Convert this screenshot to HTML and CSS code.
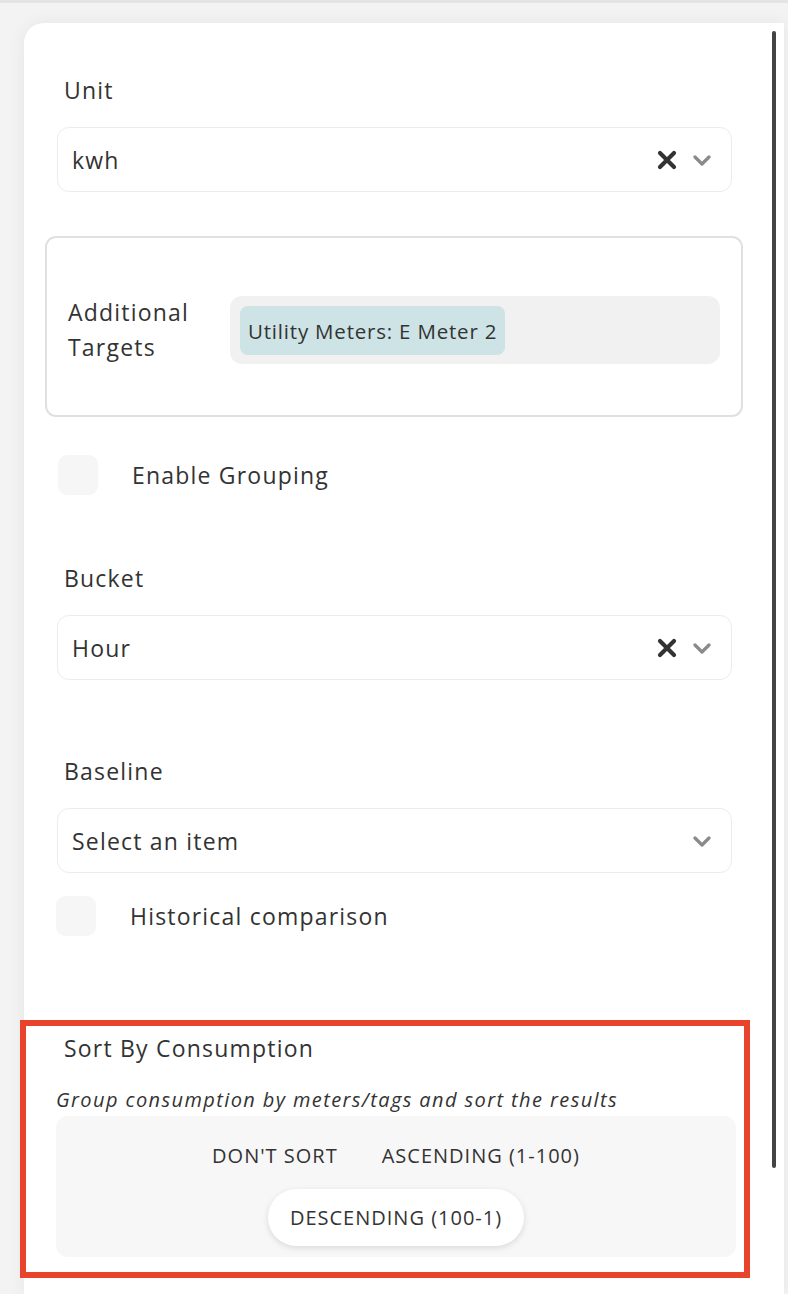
FILE: index.html
```html
<!DOCTYPE html>
<html>
<head>
<meta charset="utf-8">
<link rel="stylesheet" href="styles.css">
</head>
<body>
<div class="page">
  <div class="card">
    <div class="scrollbar"></div>

    <div class="label label-unit">Unit</div>
    <div class="select">
      <span class="select-value">kwh</span>
      <span class="select-icons">
        <svg class="ico-x" width="20" height="20" viewBox="0 0 20 20"><path d="M3 3 L17 17 M17 3 L3 17" stroke="#333" stroke-width="4.2" stroke-linecap="round" fill="none"/></svg>
        <svg class="ico-chev" width="18" height="12" viewBox="0 0 18 12"><path d="M2 2 L9 9 L16 2" stroke="#8a8a8a" stroke-width="3.2" stroke-linecap="round" stroke-linejoin="round" fill="none"/></svg>
      </span>
    </div>

    <div class="targets">
      <div class="targets-label">Additional<br>Targets</div>
      <div class="chips">
        <span class="chip">Utility Meters: E Meter 2</span>
      </div>
    </div>

    <div class="check-row check-grouping">
      <span class="checkbox"></span>
      <span class="check-text">Enable Grouping</span>
    </div>

    <div class="label label-bucket">Bucket</div>
    <div class="select">
      <span class="select-value">Hour</span>
      <span class="select-icons">
        <svg class="ico-x" width="20" height="20" viewBox="0 0 20 20"><path d="M3 3 L17 17 M17 3 L3 17" stroke="#333" stroke-width="4.2" stroke-linecap="round" fill="none"/></svg>
        <svg class="ico-chev" width="18" height="12" viewBox="0 0 18 12"><path d="M2 2 L9 9 L16 2" stroke="#8a8a8a" stroke-width="3.2" stroke-linecap="round" stroke-linejoin="round" fill="none"/></svg>
      </span>
    </div>

    <div class="label label-baseline">Baseline</div>
    <div class="select">
      <span class="select-value">Select an item</span>
      <span class="select-icons">
        <svg class="ico-chev" width="18" height="12" viewBox="0 0 18 12"><path d="M2 2 L9 9 L16 2" stroke="#8a8a8a" stroke-width="3.2" stroke-linecap="round" stroke-linejoin="round" fill="none"/></svg>
      </span>
    </div>

    <div class="check-row check-history">
      <span class="checkbox"></span>
      <span class="check-text">Historical comparison</span>
    </div>

    <div class="sort-box">
      <div class="sort-title">Sort By Consumption</div>
      <div class="sort-desc">Group consumption by meters/tags and sort the results</div>
      <div class="segment">
        <button class="seg-btn">DON'T SORT</button>
        <button class="seg-btn">ASCENDING (1-100)</button>
        <button class="seg-btn active">DESCENDING (100-1)</button>
      </div>
    </div>
  </div>
</div>
</body>
</html>
```

FILE: styles.css
```css
* { box-sizing: border-box; }

html, body {
  margin: 0;
  padding: 0;
  height: 100%;
}

body {
  background: #f3f3f3;
  border-top: 3px solid #e4e4e4;
  font-family: "Open Sans", "Liberation Sans", sans-serif;
  color: #333;
  overflow: hidden;
}

.page {
  padding: 20px 4px 0 24px;
  height: 100%;
}

.card {
  position: relative;
  background: #fff;
  border-radius: 20px 0 0 0;
  box-shadow: 0 0 18px rgba(0, 0, 0, 0.06);
  height: 100%;
  padding-top: 52px;
}

.scrollbar {
  position: absolute;
  top: 8px;
  right: 8px;
  width: 4px;
  height: 1137px;
  background: #444;
  border-radius: 2px;
}

.label {
  font-size: 23px;
  line-height: 30px;
  letter-spacing: 1.2px;
  margin-left: 40px;
}

.select {
  display: flex;
  align-items: center;
  justify-content: space-between;
  height: 65px;
  margin: 22px 52px 0 33px;
  padding: 0 20px 0 14px;
  border: 1.5px solid #ececec;
  border-radius: 12px;
  font-size: 23px;
  letter-spacing: 1.2px;
}

.select-icons {
  display: flex;
  align-items: center;
  gap: 16px;
}

.ico-x { display: block; }
.ico-chev { display: block; margin-top: 2px; }

.targets {
  display: flex;
  align-items: center;
  margin: 44px 0 0 21px;
  width: 698px;
  height: 181px;
  border: 2px solid #e0e0e0;
  border-radius: 11px;
  padding: 7px 21px 0 21px;
}

.targets-label {
  flex: 0 0 162px;
  font-size: 23px;
  line-height: 35px;
  letter-spacing: 1.2px;
}

.chips {
  flex: 1;
  background: #f1f1f1;
  border-radius: 12px;
  padding: 10px 10px 9px 10px;
  height: 68px;
}

.chip {
  display: inline-flex;
  align-items: center;
  height: 49px;
  padding: 0 8px;
  background: #cde3e5;
  border-radius: 8px;
  font-size: 20.5px;
  letter-spacing: 0.8px;
}

.check-row {
  display: flex;
  align-items: center;
  gap: 34px;
  font-size: 23px;
  letter-spacing: 1.2px;
}

.check-grouping { margin: 38px 0 0 34px; }
.check-history { margin: 23px 0 0 32px; }

.checkbox {
  width: 40px;
  height: 40px;
  background: #f6f6f6;
  border-radius: 9px;
  flex: 0 0 40px;
}

.label-bucket { margin-top: 68px; }
.label-baseline { margin-top: 76px; }

.sort-box {
  margin: 84px 0 0 -4px;
  width: 730px;
  height: 258px;
  border: 6px solid #e9432b;
  padding: 7px 0 0 0;
}

.sort-title {
  font-size: 23px;
  line-height: 30px;
  letter-spacing: 1.2px;
  margin-left: 38px;
}

.sort-desc {
  margin: 24px 0 0 30px;
  font-size: 20px;
  line-height: 26px;
  font-style: italic;
  letter-spacing: 1.4px;
}

.segment {
  display: flex;
  flex-wrap: wrap;
  justify-content: center;
  row-gap: 4px;
  margin: 3px 0 0 30px;
  width: 680px;
  height: 141px;
  padding: 11px 11px;
  background: #f7f7f7;
  border-radius: 12px;
}

.seg-btn {
  height: 57px;
  padding: 0 22px;
  border: none;
  background: transparent;
  border-radius: 29px;
  font-family: "Open Sans", "Liberation Sans", sans-serif;
  font-size: 20px;
  letter-spacing: 1px;
  color: #333;
}

.seg-btn.active {
  background: #fff;
  box-shadow: 0 2px 6px rgba(0, 0, 0, 0.12);
}
```
